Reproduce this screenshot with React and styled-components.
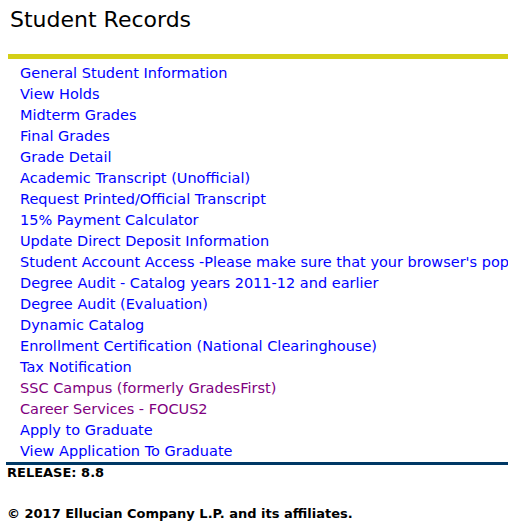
import React from "react";
import styled, { createGlobalStyle } from "styled-components";

const Global = createGlobalStyle`
  html, body { margin: 0; padding: 0; background: #fff; }
  body { font-family: Verdana, "DejaVu Sans", sans-serif; overflow: hidden; }
`;

const Page = styled.div`
  width: 508px;
  display: flex;
  flex-direction: column;
  overflow: hidden;
`;

const Title = styled.h1`
  margin: 0;
  padding: 6px 0 0 10px;
  height: 54px;
  box-sizing: border-box;
  font-weight: normal;
  font-size: 22px;
  line-height: 28px;
  color: #000;
`;

const YellowBar = styled.div`
  margin-left: 8px;
  height: 5px;
  background: #d4cf16;
`;

const LinkList = styled.ul`
  list-style: none;
  margin: 0;
  padding: 3px 0 1px 20px;
  display: flex;
  flex-direction: column;
`;

const Item = styled.li`
  height: 21px;
  line-height: 21px;
  white-space: nowrap;
`;

const Link = styled.a`
  font-size: 14.5px;
  text-decoration: none;
  color: ${(p) => (p.$visited ? "#800080" : "#0000ff")};
`;

const BlueBar = styled.div`
  margin-left: 6px;
  height: 3px;
  background: #003865;
`;

const Footer = styled.div`
  padding-left: 7px;
  font-size: 13px;
  font-weight: bold;
  color: #000;
  display: flex;
  flex-direction: column;
`;

const FootLine = styled.div`
  line-height: 16px;
  margin-top: ${(p) => p.$gap || 0}px;
`;

const links = [
  ["General Student Information"],
  ["View Holds"],
  ["Midterm Grades"],
  ["Final Grades"],
  ["Grade Detail"],
  ["Academic Transcript (Unofficial)"],
  ["Request Printed/Official Transcript"],
  ["15% Payment Calculator"],
  ["Update Direct Deposit Information"],
  ["Student Account Access -Please make sure that your browser's pop-up blocker is disabled"],
  ["Degree Audit - Catalog years 2011-12 and earlier"],
  ["Degree Audit (Evaluation)"],
  ["Dynamic Catalog"],
  ["Enrollment Certification (National Clearinghouse)"],
  ["Tax Notification"],
  ["SSC Campus (formerly GradesFirst)", true],
  ["Career Services - FOCUS2", true],
  ["Apply to Graduate"],
  ["View Application To Graduate"],
];

export default function App() {
  return (
    <Page>
      <Global />
      <Title>Student Records</Title>
      <YellowBar />
      <LinkList>
        {links.map(([t, v]) => (
          <Item key={t}>
            <Link href="#" $visited={v}>{t}</Link>
          </Item>
        ))}
      </LinkList>
      <BlueBar />
      <Footer>
        <FootLine>RELEASE: 8.8</FootLine>
        <FootLine $gap={25}>© 2017 Ellucian Company L.P. and its affiliates.</FootLine>
      </Footer>
    </Page>
  );
}
